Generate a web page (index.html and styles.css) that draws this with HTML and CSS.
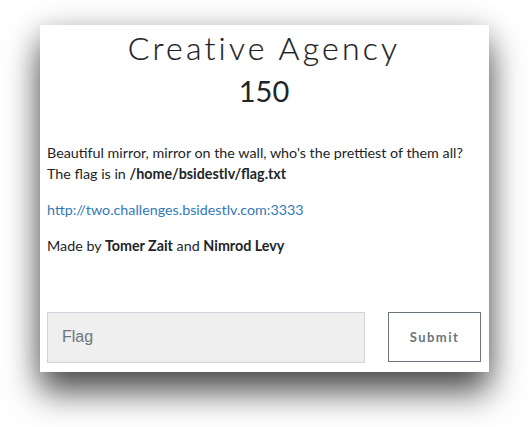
FILE: index.html
```html
<!DOCTYPE html>
<html>
<head>
<meta charset="utf-8">
<link rel="stylesheet" href="styles.css">
</head>
<body>
<div class="card">
  <h1 class="title">Creative Agency</h1>
  <div class="points">150</div>
  <div class="desc">
    <p>Beautiful mirror, mirror on the wall, who's the prettiest of them all?<br>The flag is in <b>/home/bsidestlv/flag.txt</b></p>
    <p><a href="#">http://two.challenges.bsidestlv.com:3333</a></p>
    <p>Made by <b>Tomer Zait</b> and <b>Nimrod Levy</b></p>
  </div>
  <form class="flag-form">
    <input class="flag-input" type="text" placeholder="Flag">
    <button class="submit" type="button">Submit</button>
  </form>
</div>
</body>
</html>
```
FILE: styles.css
```css
html {
  height: 100%;
}
html, body {
  margin: 0;
  background: #fff;
}
body {
  min-height: 100%;
  box-sizing: border-box;
  font-family: Lato, "Open Sans", sans-serif;
  color: #212529;
  padding: 25px 0 0 40px;
}
.card {
  width: 449px;
  height: 347px;
  box-sizing: border-box;
  background: #fff;
  box-shadow: 0 20px 32px rgba(0,0,0,0.68), 0 0 26px rgba(0,0,0,0.14);
  padding: 0 8px 9px 7px;
  display: flex;
  flex-direction: column;
}
.title {
  margin: 0;
  text-align: center;
  font-weight: 300;
  font-size: 32px;
  letter-spacing: 3.2px;
  line-height: 46px;
  color: #1d2125;
  -webkit-text-stroke: 0.2px #1d2125;
}
.points {
  text-align: center;
  font-size: 29px;
  line-height: 40px;
  color: #212529;
}
.desc {
  margin-top: 31px;
  font-size: 14.3px;
  line-height: 21px;
}
.desc p {
  margin: 0 0 15px;
}
.desc a {
  color: #337ab7;
  text-decoration: none;
}
.flag-form {
  margin: auto 0 0;
  display: flex;
  gap: 23px;
  align-items: flex-start;
}
.flag-input {
  width: 318px;
  height: 51px;
  box-sizing: border-box;
  background: #efefef;
  border: 1px solid #ced4da;
  padding: 0 14px 2px;
  font-family: "Liberation Sans", Arial, sans-serif;
  font-size: 16px;
  color: #495057;
  outline: none;
}
.flag-input::placeholder {
  color: #6c757d;
}
.submit {
  width: 93px;
  height: 50px;
  box-sizing: border-box;
  background: #fff;
  border: 1px solid #6c757d;
  font-family: Lato, sans-serif;
  font-weight: 700;
  font-size: 13px;
  letter-spacing: 1.5px;
  color: #6c757d;
  padding: 0;
}
```
